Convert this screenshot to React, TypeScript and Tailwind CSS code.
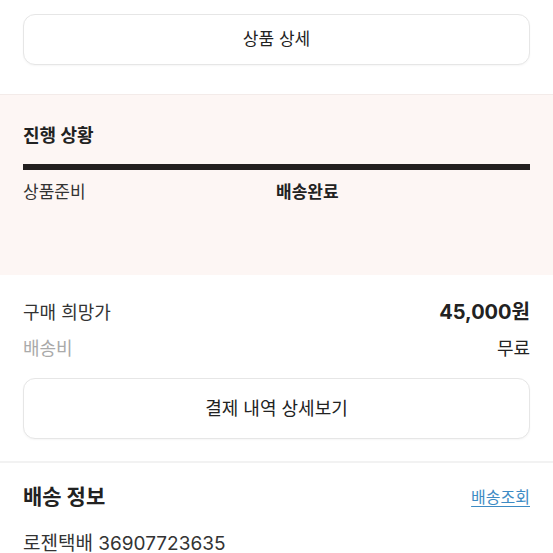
export default function App() {
  const font = { fontFamily: 'Inter, "Noto Sans CJK KR", sans-serif' };

  return (
    <div className="w-[553px] h-[553px] overflow-hidden bg-white text-[#222]" style={font}>
      {/* Product detail button */}
      <div className="px-[23px] pt-[14px] pb-[29px]">
        <button className="w-full h-[51px] rounded-[12px] border border-[#e6e6e6] bg-white text-[17px] text-[#222] shadow-[0_1px_2px_rgba(0,0,0,0.04)]">
          상품 상세
        </button>
      </div>

      {/* Progress */}
      <div className="h-[181px] bg-[#fdf6f4] border-t border-[#f3ebe9] px-[23px] pt-[28px]">
        <h3 className="text-[18px] font-bold leading-[26px]">진행 상황</h3>
        <div className="mt-[15px] h-[6px] bg-[#231f1f]" />
        <div className="mt-[9px] flex text-[17px] leading-[26px]">
          <span className="w-[253px] text-[#333]">상품준비</span>
          <span className="font-bold">배송완료</span>
        </div>
      </div>

      {/* Price */}
      <div className="px-[23px] pt-[24px]">
        <div className="flex items-center justify-between h-[26px]">
          <span className="text-[18px] text-[#333]">구매 희망가</span>
          <span className="text-[20px] font-bold">45,000원</span>
        </div>
        <div className="flex items-center justify-between h-[26px] mt-[10px]">
          <span className="text-[18px] text-[#aaa]">배송비</span>
          <span className="text-[18px] text-[#222]">무료</span>
        </div>
        <button className="mt-[17px] w-full h-[61px] rounded-[12px] border border-[#e6e6e6] bg-white text-[18px] text-[#222] shadow-[0_1px_2px_rgba(0,0,0,0.04)]">
          결제 내역 상세보기
        </button>
      </div>

      <div className="mt-[22px] h-[2px] bg-[#f2f2f2]" />

      {/* Delivery */}
      <div className="px-[23px] pt-[20px]">
        <div className="flex items-center justify-between h-[28px]">
          <h3 className="text-[21px] font-bold">배송 정보</h3>
          <a className="text-[16px] text-[#3d8bc4] underline underline-offset-[3px]">배송조회</a>
        </div>
        <p className="mt-[20px] text-[19px] text-[#333] leading-[26px]">로젠택배 36907723635</p>
      </div>
    </div>
  );
}
